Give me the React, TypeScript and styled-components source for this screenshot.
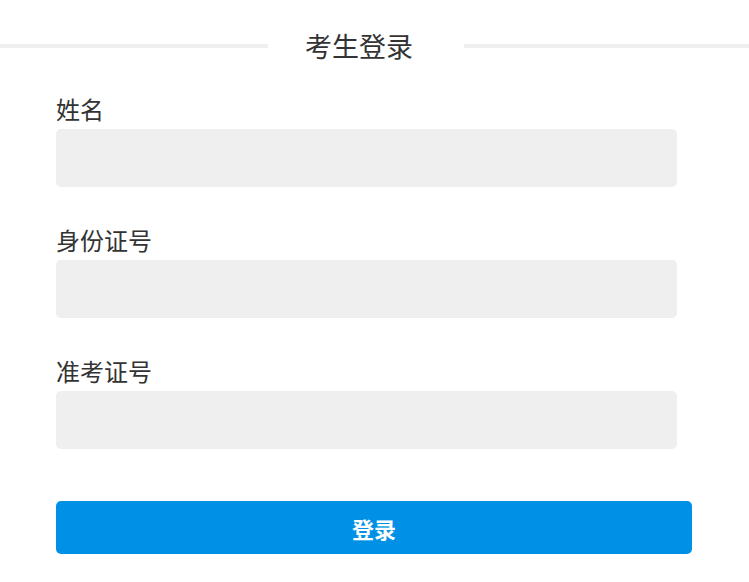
import React from "react";
import styled, { createGlobalStyle } from "styled-components";

const GlobalStyle = createGlobalStyle`
  html, body {
    margin: 0;
    padding: 0;
    background: #ffffff;
  }
  body {
    font-family: "Noto Sans CJK SC", "Noto Sans", sans-serif;
    color: #333333;
  }
`;

const Page = styled.div`
  width: 749px;
  padding-top: 26px;
`;

const Header = styled.div`
  display: flex;
  align-items: center;
`;

const Rule = styled.div<{ $width?: number }>`
  height: 4px;
  background: #efefef;
  ${(p) => (p.$width ? `width: ${p.$width}px; flex: none;` : `flex: 1;`)}
`;

const Title = styled.h1`
  margin: 0;
  padding: 0 51px 0 37px;
  font-size: 27px;
  line-height: 40px;
  font-weight: 400;
  color: #333333;
  white-space: nowrap;
`;

const Form = styled.form`
  display: flex;
  flex-direction: column;
  padding: 0 56px;
  margin-top: 27px;
`;

const Field = styled.div`
  display: flex;
  flex-direction: column;
  margin-bottom: 37px;
`;

const Label = styled.label`
  font-size: 24px;
  line-height: 32px;
  margin-bottom: 4px;
  color: #333333;
`;

const Input = styled.input`
  box-sizing: border-box;
  width: 621px;
  height: 58px;
  border: none;
  border-radius: 5px;
  background: #efefef;
  outline: none;
  padding: 0 12px;
  font-family: inherit;
  font-size: 18px;
  color: #333333;
`;

const Button = styled.button`
  width: 636px;
  height: 53px;
  margin-top: 15px;
  border: none;
  border-radius: 5px;
  background: #0091e6;
  color: #ffffff;
  font-family: inherit;
  font-size: 22px;
  font-weight: 700;
  cursor: pointer;
`;

const fields = [
  { id: "name", label: "姓名" },
  { id: "idcard", label: "身份证号" },
  { id: "ticket", label: "准考证号" },
];

export default function App() {
  return (
    <>
      <GlobalStyle />
      <Page>
        <Header>
          <Rule $width={268} />
          <Title>考生登录</Title>
          <Rule />
        </Header>
        <Form onSubmit={(e) => e.preventDefault()}>
          {fields.map((f) => (
            <Field key={f.id}>
              <Label htmlFor={f.id}>{f.label}</Label>
              <Input id={f.id} type="text" />
            </Field>
          ))}
          <Button type="submit">登录</Button>
        </Form>
      </Page>
    </>
  );
}
